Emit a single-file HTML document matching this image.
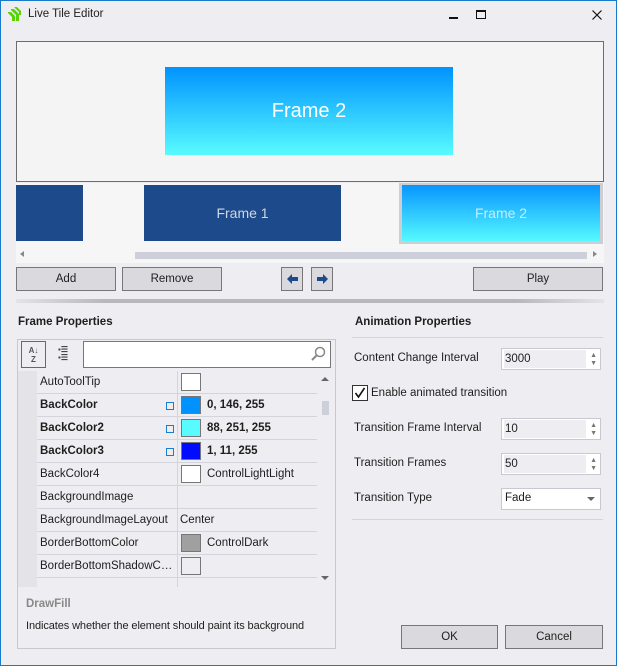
<!DOCTYPE html>
<html><head><meta charset="utf-8"><style>
*{margin:0;padding:0;box-sizing:border-box}
body{width:617px;height:666px;overflow:hidden;background:#eeeef2;font-family:"Liberation Sans",sans-serif;font-size:11.5px;color:#1e1e1e;position:relative}
.a{position:absolute}
.btn{position:absolute;background:#dadade;border:1px solid #777;text-align:center;font-size:11.5px;line-height:22px;color:#1e1e1e}
.row{position:absolute;left:37px;width:280px;height:23px;border-bottom:1px solid #d4d4dc}
.row .n{position:absolute;left:3px;top:5px;white-space:nowrap;width:134px;overflow:hidden;text-overflow:ellipsis}
.row .v{position:absolute;left:140px;top:0;width:140px;height:23px;border-left:1px solid #d4d4dc}
.sw{position:absolute;left:3px;top:2px;width:20px;height:18px;border:1px solid #777}
.vt{position:absolute;left:29px;top:5px;white-space:nowrap}
.b{font-weight:bold}
.mk{position:absolute;left:129px;top:8px;width:8px;height:8px;border:1px solid #1a7dd0}
.lbl{position:absolute;left:354px}
.inp{position:absolute;left:501px;width:100px;height:22px;background:#fff;border:1px solid #c8c8d0}
.inp .t{position:absolute;left:2px;top:1px;width:82px;height:18px;background:#eeeef2;padding-left:1px;line-height:18px}
.inp .u{position:absolute;right:3px;top:3px;font-size:7px;color:#777;line-height:8px}
</style></head><body>
<div class="a" style="left:0;top:0;width:617px;height:666px;border:1px solid #1979ca"></div>
<svg class="a" style="left:6px;top:6px" width="16" height="16" viewBox="0 0 16 16"><path d="M2 6h3l4 4v5H6v-4L2 7z M5 3h3l5 5v7h-3V9L5 4z M8 1h3l4 4v4h-2V6z" fill="#5ad20a"/></svg>
<div class="a" style="left:28px;top:8px;font-size:11.5px">Live Tile Editor</div>
<div class="a" style="left:449px;top:17px;width:9px;height:2px;background:#111"></div>
<div class="a" style="left:476px;top:10px;width:10px;height:9px;border:1px solid #111;border-top-width:2px"></div>
<svg class="a" style="left:592px;top:10px" width="10" height="10" viewBox="0 0 10 10"><path d="M0.5 0.5l9 9M9.5 0.5l-9 9" stroke="#111" stroke-width="1.2"/></svg>
<div class="a" style="left:16px;top:41px;width:588px;height:141px;border:1px solid #6d6d6d;background:#f4f4f4"></div>
<div class="a" style="left:165px;top:67px;width:288px;height:88px;background:linear-gradient(#0092ff,#58fbff);color:#fff;font-size:20px;text-align:center;line-height:88px">Frame 2</div>
<div class="a" style="left:16px;top:183px;width:588px;height:80px;background:#f6f6f6"></div>
<div class="a" style="left:16px;top:185px;width:67px;height:56px;background:#1c4a8a"></div>
<div class="a" style="left:144px;top:185px;width:197px;height:56px;background:#1c4a8a;color:#cfd6e4;font-size:14px;text-align:center;line-height:56px">Frame 1</div>
<div class="a" style="left:399px;top:183px;width:204px;height:61px;background:#cdcdd2"></div>
<div class="a" style="left:402px;top:185px;width:198px;height:56px;background:linear-gradient(#0895ff,#55f9ff);color:#c7ecff;font-size:14px;text-align:center;line-height:56px">Frame 2</div>
<div class="a" style="left:20px;top:251px;width:0;height:0;border:3px solid transparent;border-right:4px solid #888;border-left:0"></div>
<div class="a" style="left:135px;top:252px;width:452px;height:7px;background:#cdcfda"></div>
<div class="a" style="left:593px;top:251px;width:0;height:0;border:3px solid transparent;border-left:4px solid #888;border-right:0"></div>
<div class="btn" style="left:16px;top:267px;width:100px;height:24px">Add</div>
<div class="btn" style="left:122px;top:267px;width:100px;height:24px">Remove</div>
<div class="btn" style="left:281px;top:267px;width:22px;height:24px"><svg style="position:absolute;left:5px;top:6px" width="11" height="10" viewBox="0 0 11 10"><path d="M0 5L5 0v3h6v4H5v3z" fill="#1c4a8a"/></svg></div>
<div class="btn" style="left:311px;top:267px;width:22px;height:24px"><svg style="position:absolute;left:5px;top:6px" width="11" height="10" viewBox="0 0 11 10"><path d="M11 5L6 0v3H0v4h6v3z" fill="#1c4a8a"/></svg></div>
<div class="btn" style="left:473px;top:267px;width:130px;height:24px">Play</div>
<div class="a" style="left:16px;top:299px;width:588px;height:4px;background:linear-gradient(90deg,#e4e4e8,#b8b8bc 15%,#b8b8bc 85%,#e4e4e8)"></div>
<div class="a b" style="left:18px;top:316px">Frame Properties</div>
<div class="a" style="left:17px;top:339px;width:319px;height:310px;border:1px solid #c8c8d0"></div>
<div class="a" style="left:21px;top:341px;width:25px;height:27px;border:1px solid #1a7dd0;font-size:8px;font-weight:bold;color:#555;text-align:center;line-height:9px;padding-top:4px">A↓<br>Z</div>
<div class="a" style="left:58px;top:346px;font-size:8px;color:#444;line-height:8px;font-weight:bold">▪☰<br>▪☰</div>
<div class="a" style="left:83px;top:341px;width:248px;height:27px;background:#fff;border:1px solid #777"></div>
<svg class="a" style="left:310px;top:346px" width="16" height="16" viewBox="0 0 16 16"><circle cx="10" cy="6" r="4.5" fill="none" stroke="#888" stroke-width="1.5"/><path d="M7 9l-5 5" stroke="#888" stroke-width="2"/></svg>
<div class="a" style="left:18px;top:371px;width:19px;height:216px;background:#e3e3e8"></div>
<div class="row" style="top:371px"><div class="n">AutoToolTip</div><div class="v"><div class="sw" style="background:#fff"></div></div></div>
<div class="row" style="top:394px"><div class="n b">BackColor</div><div class="mk"></div><div class="v"><div class="sw" style="background:#0092ff"></div><div class="vt b">0, 146, 255</div></div></div>
<div class="row" style="top:417px"><div class="n b">BackColor2</div><div class="mk"></div><div class="v"><div class="sw" style="background:#58fbff"></div><div class="vt b">88, 251, 255</div></div></div>
<div class="row" style="top:440px"><div class="n b">BackColor3</div><div class="mk"></div><div class="v"><div class="sw" style="background:#010bff"></div><div class="vt b">1, 11, 255</div></div></div>
<div class="row" style="top:463px"><div class="n">BackColor4</div><div class="v"><div class="sw" style="background:#fff"></div><div class="vt">ControlLightLight</div></div></div>
<div class="row" style="top:486px"><div class="n">BackgroundImage</div><div class="v"></div></div>
<div class="row" style="top:509px"><div class="n">BackgroundImageLayout</div><div class="v"><div class="vt" style="left:2px">Center</div></div></div>
<div class="row" style="top:532px"><div class="n">BorderBottomColor</div><div class="v"><div class="sw" style="background:#a0a0a0"></div><div class="vt">ControlDark</div></div></div>
<div class="row" style="top:555px"><div class="n">BorderBottomShadowColor</div><div class="v"><div class="sw" style="background:#eeeef2"></div></div></div>
<div class="row" style="top:578px;height:9px;overflow:hidden;border:0"><div class="v"></div></div>
<div class="a" style="left:321px;top:377px;border:4px solid transparent;border-bottom:4px solid #666;border-top:0"></div>
<div class="a" style="left:322px;top:401px;width:7px;height:14px;background:#cdcfda"></div>
<div class="a" style="left:321px;top:576px;border:4px solid transparent;border-top:4px solid #666;border-bottom:0"></div>
<div class="a b" style="left:26px;top:598px;color:#888">DrawFill</div>
<div class="a" style="left:26px;top:620px;font-size:11px;letter-spacing:-0.1px">Indicates whether the element should paint its background</div>
<div class="a b" style="left:355px;top:316px">Animation Properties</div>
<div class="a" style="left:352px;top:337px;width:251px;height:1px;background:#d4d4dc"></div>
<div class="lbl" style="top:352px">Content Change Interval</div>
<div class="inp" style="top:348px"><div class="t">3000</div><div class="u">▲<br>▼</div></div>
<div class="a" style="left:352px;top:385px;width:16px;height:16px;border:1px solid #333;background:#fff"><svg style="position:absolute;left:1px;top:1px" width="12" height="12" viewBox="0 0 12 12"><path d="M1.5 6l3 4 6-9" fill="none" stroke="#111" stroke-width="1.6"/></svg></div>
<div class="a" style="left:371px;top:387px">Enable animated transition</div>
<div class="lbl" style="top:422px">Transition Frame Interval</div>
<div class="inp" style="top:418px"><div class="t">10</div><div class="u">▲<br>▼</div></div>
<div class="lbl" style="top:457px">Transition Frames</div>
<div class="inp" style="top:453px"><div class="t">50</div><div class="u">▲<br>▼</div></div>
<div class="lbl" style="top:492px">Transition Type</div>
<div class="inp" style="top:488px"><div style="position:absolute;left:3px;top:3px">Fade</div><div style="position:absolute;right:5px;top:8px;border:4px solid transparent;border-top:4px solid #666;border-bottom:0"></div></div>
<div class="a" style="left:352px;top:519px;width:251px;height:1px;background:#d4d4dc"></div>
<div class="btn" style="left:401px;top:625px;width:97px;height:24px">OK</div>
<div class="btn" style="left:505px;top:625px;width:98px;height:24px">Cancel</div>
</body></html>
